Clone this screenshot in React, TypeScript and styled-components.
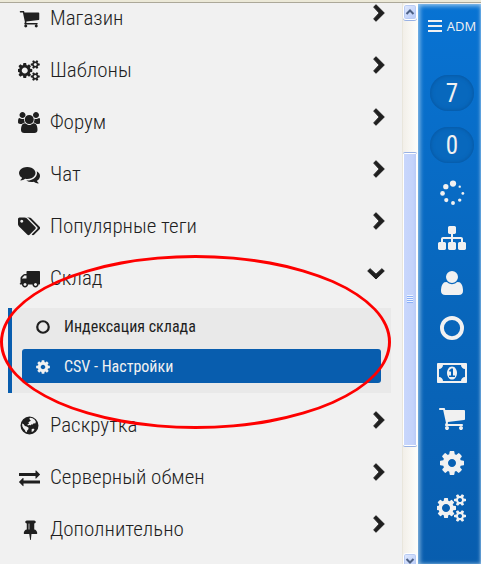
import React from "react";
import styled, { createGlobalStyle } from "styled-components";

const GlobalStyle = createGlobalStyle`
  *, *::before, *::after { box-sizing: border-box; }
  body { margin: 0; background: #f1f1f1; }
  button { font: inherit; color: inherit; border: 0; padding: 0; background: none; cursor: pointer; }
  ul { list-style: none; margin: 0; padding: 0; }
`;

const ink = "#1f1f1f";
const blue = "#085dae";

/* ---------- icons ---------- */

type IconName =
  | "cart" | "cog" | "cogs" | "users" | "comments" | "tags" | "truck" | "globe"
  | "exchange" | "pin" | "ring" | "sitemap" | "user" | "money" | "spinner";

const paths: Partial<Record<IconName, string>> = {
  cart: "M704 1536q0 52-38 90t-90 38-90-38-38-90 38-90 90-38 90 38 38 90zm896 0q0 52-38 90t-90 38-90-38-38-90 38-90 90-38 90 38 38 90zm128-1088v512q0 24-16.5 42.5t-40.5 21.5l-1044 122q13 60 13 70 0 16-24 64h920q26 0 45 19t19 45-19 45-45 19h-1024q-26 0-45-19t-19-45q0-11 8-31.5t16-36 21.5-40 15.5-29.5l-177-823h-204q-26 0-45-19t-19-45 19-45 45-19h256q16 0 28.5 6.5t19.5 15.5 13 24.5 8 26 5.5 29.5 4.5 26h1201q26 0 45 19t19 45z",
  cog: "M1152 896q0-106-75-181t-181-75-181 75-75 181 75 181 181 75 181-75 75-181zm512-109v222q0 12-8 23t-20 13l-185 28q-19 54-39 91 35 50 107 138 10 12 10 25t-9 23q-27 37-99 108t-94 71q-12 0-26-9l-138-108q-44 23-91 38-16 136-29 186-7 28-36 28h-222q-14 0-24.5-8.5t-11.5-21.5l-28-184q-49-16-90-37l-141 107q-10 9-25 9-14 0-25-11-126-114-165-168-7-10-7-23 0-12 8-23 15-21 51-66.5t54-70.5q-27-50-41-99l-183-27q-13-2-21-12.5t-8-23.5v-222q0-12 8-23t19-13l186-28q14-46 39-92-40-57-107-138-10-12-10-24 0-10 9-23 26-36 98.5-107.5t94.5-71.5q13 0 26 10l138 107q44-23 91-38 16-136 29-186 7-28 36-28h222q14 0 24.5 8.5t11.5 21.5l28 184q49 16 90 37l142-107q9-9 24-9 13 0 25 10 129 119 165 170 7 8 7 22 0 12-8 23-15 21-51 66.5t-54 70.5q26 50 41 98l183 28q13 2 21 12.5t8 23.5z",
  cogs: "M832 896q0-106-75-181t-181-75-181 75-75 181 75 181 181 75 181-75 75-181zm768 512q0-52-38-90t-90-38-90 38-38 90q0 53 37.5 90.5t90.5 37.5 90.5-37.5 37.5-90.5zm0-1024q0-52-38-90t-90-38-90 38-38 90q0 53 37.5 90.5t90.5 37.5 90.5-37.5 37.5-90.5zm-384 421v185q0 10-7 19.5t-16 10.5l-155 24q-11 35-32 76 34 48 90 115 7 11 7 20 0 12-7 19-23 30-82.5 89.5t-78.5 59.5q-11 0-21-7l-115-90q-37 19-77 31-11 108-23 155-7 24-30 24h-186q-11 0-20-7.5t-10-17.5l-23-153q-34-10-75-31l-118 89q-7 7-20 7-11 0-21-8-144-133-144-160 0-9 7-19 10-14 41-53t47-61q-23-44-35-82l-152-24q-10-1-17-9.5t-7-19.5v-185q0-10 7-19.5t16-10.5l155-24q11-35 32-76-34-48-90-115-7-11-7-20 0-12 7-20 22-30 82-89t79-59q11 0 21 7l115 90q34-18 77-32 11-108 23-154 7-24 30-24h186q11 0 20 7.5t10 17.5l23 153q34 10 75 31l118-89q8-7 20-7 11 0 21 8 144 133 144 160 0 8-7 19-12 16-42 54t-45 60q23 48 34 82l152 23q10 2 17 10.5t7 19.5zm640 533v140q0 16-149 31-12 27-30 52 51 113 51 138 0 4-4 7-122 71-124 71-8 0-46-47t-52-68q-20 2-30 2t-30-2q-14 21-52 68t-46 47q-2 0-124-71-4-3-4-7 0-25 51-138-18-25-30-52-149-15-149-31v-140q0-16 149-31 13-29 30-52-51-113-51-138 0-4 4-7 4-2 35-20t59-34 30-16q8 0 46 46.5t52 67.5q20-2 30-2t30 2q51-71 92-112l6-2q4 0 124 70 4 3 4 7 0 25-51 138 17 23 30 52 149 15 149 31zm0-1024v140q0 16-149 31-12 27-30 52 51 113 51 138 0 4-4 7-122 71-124 71-8 0-46-47t-52-68q-20 2-30 2t-30-2q-14 21-52 68t-46 47q-2 0-124-71-4-3-4-7 0-25 51-138-18-25-30-52-149-15-149-31v-140q0-16 149-31 13-29 30-52-51-113-51-138 0-4 4-7 4-2 35-20t59-34 30-16q8 0 46 46.5t52 67.5q20-2 30-2t30 2q51-71 92-112l6-2q4 0 124 70 4 3 4 7 0 25-51 138 17 23 30 52 149 15 149 31z",
  users: "M593 896q-162 5-265 128h-134q-82 0-138-40.5t-56-118.5q0-353 124-353 6 0 43.5 21t97.5 42.5 119 21.5q67 0 133-23-5 37-5 66 0 139 81 256zm1071 637q0 120-73 189.5t-194 69.5h-874q-121 0-194-69.5t-73-189.5q0-53 3.5-103.5t14-109 26.5-108.5 43-97.5 62-81 85.5-53.5 111.5-20q10 0 43 21.5t73 48 107 48 135 21.5 135-21.5 107-48 73-48 43-21.5q61 0 111.5 20t85.5 53.5 62 81 43 97.5 26.5 108.5 14 109 3.5 103.5zm-1024-1277q0 106-75 181t-181 75-181-75-75-181 75-181 181-75 181 75 75 181zm704 384q0 159-112.5 271.5t-271.5 112.5-271.5-112.5-112.5-271.5 112.5-271.5 271.5-112.5 271.5 112.5 112.5 271.5zm576 225q0 78-56 118.5t-138 40.5h-134q-103-123-265-128 81-117 81-256 0-29-5-66 66 23 133 23 59 0 119-21.5t97.5-42.5 43.5-21q124 0 124 353zm-128-609q0 106-75 181t-181 75-181-75-75-181 75-181 181-75 181 75 75 181z",
  comments: "M1408 768q0 139-94 257t-256.5 186.5-353.5 68.5q-86 0-176-16-124 88-278 128-36 9-86 16h-3q-11 0-20.5-8t-11.5-21q-1-3-1-6.5t.5-6.5 2-6l2.5-5 3.5-5.5 4-5 4.5-5 4-4.5q5-6 23-25t26-29.5 22.5-29 25-38.5 20.5-44q-124-72-195-177t-71-224q0-139 94-257t256.5-186.5 353.5-68.5 353.5 68.5 256.5 186.5 94 257zm384 256q0 120-71 224.5t-195 176.5q10 24 20.5 44t25 38.5 22.5 29 26 29.5 23 25q1 1 4 4.5t4.5 5 4 5 3.5 5.5l2.5 5 2 6 .5 6.5-1 6.5q-3 14-13 22t-22 7q-50-7-86-16-154-40-278-128-90 16-176 16-271 0-472-132 58 4 88 4 161 0 309-45t264-129q125-92 192-212t67-254q0-77-23-152 129 71 204 178t75 230z",
  tags: "M448 448q0-53-37.5-90.5t-90.5-37.5-90.5 37.5-37.5 90.5 37.5 90.5 90.5 37.5 90.5-37.5 37.5-90.5zm1067 576q0 53-37 90l-491 492q-39 37-91 37-53 0-90-37l-715-716q-38-37-64.5-101t-26.5-117v-416q0-52 38-90t90-38h416q53 0 117 26.5t102 64.5l715 714q37 39 37 91zm384 0q0 53-37 90l-491 492q-39 37-91 37-36 0-59-14t-53-45l470-470q37-37 37-90 0-52-37-91l-715-714q-38-38-102-64.5t-117-26.5h224q53 0 117 26.5t102 64.5l715 714q37 39 37 91z",
  truck: "M640 1408q0-52-38-90t-90-38-90 38-38 90 38 90 90 38 90-38 38-90zm-384-512h384v-256h-158q-13 0-22 9l-195 195q-9 9-9 22v30zm1280 512q0-52-38-90t-90-38-90 38-38 90 38 90 90 38 90-38 38-90zm256-1088v1024q0 15-4 26.5t-13.5 18.5-16.5 11.5-23.5 6-22.5 2-25.5 0-22.5-.5q0 106-75 181t-181 75-181-75-75-181h-384q0 106-75 181t-181 75-181-75-75-181h-64q-3 0-22.5.5t-25.5 0-22.5-2-23.5-6-16.5-11.5-13.5-18.5-4-26.5q0-26 19-45t45-19v-320q0-8-.5-35t0-38 2.5-34.5 6.5-37 14-30.5 22.5-30l198-198q19-19 50.5-32t58.5-13h160v-192q0-26 19-45t45-19h1024q26 0 45 19t19 45z",
  exchange: "M1792 1184v192q0 13-9.5 22.5t-22.5 9.5h-1376v192q0 13-9.5 22.5t-22.5 9.5q-12 0-24-10l-319-320q-9-9-9-22 0-14 9-23l320-320q9-9 23-9 13 0 22.5 9.5t9.5 22.5v192h1376q13 0 22.5 9.5t9.5 22.5zm0-544q0 14-9 23l-320 320q-9 9-23 9-13 0-22.5-9.5t-9.5-22.5v-192h-1376q-13 0-22.5-9.5t-9.5-22.5v-192q0-13 9.5-22.5t22.5-9.5h1376v-192q0-14 9-23t23-9q12 0 24 10l319 319q9 9 9 23z",
  pin: "M800 864v-448q0-14-9-23t-23-9-23 9-9 23v448q0 14 9 23t23 9 23-9 9-23zm672 352q0 26-19 45t-45 19h-429l-51 483q-2 12-10.5 20.5t-20.5 8.5h-1q-27 0-32-27l-76-485h-404q-26 0-45-19t-19-45q0-123 78.5-221.5t177.5-98.5v-512q-52 0-90-38t-38-90 38-90 90-38h640q52 0 90 38t38 90-38 90-90 38v512q99 0 177.5 98.5t78.5 221.5z",
  sitemap: "M1792 1248v320q0 40-28 68t-68 28h-320q-40 0-68-28t-28-68v-320q0-40 28-68t68-28h96v-192h-512v192h96q40 0 68 28t28 68v320q0 40-28 68t-68 28h-320q-40 0-68-28t-28-68v-320q0-40 28-68t68-28h96v-192h-512v192h96q40 0 68 28t28 68v320q0 40-28 68t-68 28h-320q-40 0-68-28t-28-68v-320q0-40 28-68t68-28h96v-192q0-52 38-90t90-38h512v-192h-96q-40 0-68-28t-28-68v-320q0-40 28-68t68-28h320q40 0 68 28t28 68v320q0 40-28 68t-68 28h-96v192h512q52 0 90 38t38 90v192h96q40 0 68 28t28 68z",
  user: "M1600 1405q0 120-73 189.5t-194 69.5h-874q-121 0-194-69.5t-73-189.5q0-53 3.5-103.5t14-109 26.5-108.5 43-97.5 62-81 85.5-53.5 111.5-20q9 0 42 21.5t74.5 48 108 48 133.5 21.5 133.5-21.5 108-48 74.5-48 42-21.5q61 0 111.5 20t85.5 53.5 62 81 43 97.5 26.5 108.5 14 109 3.5 103.5zm-320-893q0 159-112.5 271.5t-271.5 112.5-271.5-112.5-112.5-271.5 112.5-271.5 271.5-112.5 271.5 112.5 112.5 271.5z",
  money: "M768 1152h384v-96h-128v-448h-114l-148 137 77 80q42-37 55-57h2v288h-128v96zm512-256q0 70-21 142t-59.5 134-101.5 101-138 39-138-39-101.5-101-59.5-134-21-142 21-142 59.5-134 101.5-101 138-39 138 39 101.5 101 59.5 134 21 142zm512 256v-512q-106 0-181-75t-75-181h-1152q0 106-75 181t-181 75v512q106 0 181 75t75 181h1152q0-106 75-181t181-75zm128-832v1152q0 26-19 45t-45 19h-1792q-26 0-45-19t-19-45v-1152q0-26 19-45t45-19h1792q26 0 45 19t19 45z",
  globe: "M896 128a768 768 0 1 1 0 1536a768 768 0 1 1 0-1536zM960 230L1160 270L1340 400L1440 580L1390 720L1250 700L1180 800L1070 790L1010 880L880 860L760 900L720 800L860 720L800 620L900 560L1010 500L930 400L880 300zM260 720L400 790L500 930L660 990L820 1080L800 1220L700 1330L660 1470L560 1420L500 1270L380 1150L290 980zM1080 1220L1210 1150L1320 1230L1220 1380L1080 1440z",
};

const widths: Partial<Record<IconName, number>> = { cogs: 1920, users: 1920, tags: 1920, money: 1920, pin: 1536 };

const spinnerDots: [number, number, number][] = [
  [960, 290, 200], [500, 490, 170], [290, 920, 150], [530, 1350, 135],
  [960, 1540, 125], [1390, 1350, 110], [1590, 920, 90], [1390, 490, 75],
];

const Svg = styled.svg`
  display: block;
  flex: none;
  fill: currentColor;
`;

function Icon({ name, size }: { name: IconName; size: number }) {
  const w = widths[name] ?? 1792;
  return (
    <Svg viewBox={`0 0 ${w} 1792`} width={(w / 1792) * size} height={size} aria-hidden="true">
      {name === "ring" && <circle cx="896" cy="896" r="644" fill="none" stroke="currentColor" strokeWidth="248" />}
      {name === "spinner" && spinnerDots.map(([x, y, r]) => <circle key={`${x}-${y}`} cx={x} cy={y} r={r} />)}
      {paths[name] && <path d={paths[name]} fillRule={name === "globe" ? "evenodd" : "nonzero"} />}
    </Svg>
  );
}

const ChevronSvg = styled.svg`
  display: block;
  flex: none;
  align-self: flex-start;
  margin-top: 12px;
  fill: currentColor;
  stroke: currentColor;
  stroke-width: 1;
  stroke-linejoin: round;
`;

function Chevron({ open }: { open?: boolean }) {
  return open ? (
    <ChevronSvg width="18" height="18" viewBox="0 0 18 18" aria-hidden="true">
      <path d="M.7 7L3.1 4.7L9 10.2L14.9 4.7L17.3 7L9 15z" />
    </ChevronSvg>
  ) : (
    <ChevronSvg width="12" height="18" viewBox="0 0 12 18" aria-hidden="true">
      <path d="M3 .7L11.3 9L3 17.3L.7 14.9L6.2 9L.7 3.1z" />
    </ChevronSvg>
  );
}

/* ---------- page ---------- */

const Page = styled.div`
  height: 100vh;
  display: flex;
  flex-direction: column;
  overflow: hidden;
  font-family: "Roboto Condensed", Roboto, sans-serif;
  color: ${ink};
`;

const TopEdge = styled.div`
  flex: none;
  height: 3px;
  background: #ece9d8;
  border-bottom: 1px solid #aca899;
`;

const Body = styled.div`
  flex: 1;
  min-height: 0;
  display: grid;
  grid-template-columns: minmax(0, 1fr) 16px 63px;
  grid-template-rows: minmax(0, 1fr);
`;

const Menu = styled.nav`
  overflow: hidden;
  background: #f1f1f1;
`;

const MenuList = styled.ul`
  margin-top: -11px;
`;

const MenuButton = styled.button`
  width: 100%;
  height: 52px;
  padding: 0 17px 0 18px;
  display: flex;
  align-items: center;
  gap: 10px;
  text-align: left;
  font-size: 21px;
  font-weight: 300;
  line-height: 24px;
`;

const IconSlot = styled.span<{ $width: number }>`
  flex: none;
  width: ${(p) => p.$width}px;
  display: flex;
  justify-content: center;
`;

const Label = styled.span`
  flex: 1;
  min-width: 0;
  white-space: nowrap;
`;

const SubMenu = styled.div`
  position: relative;
  margin: 4px 11px 6px 8px;
  padding: 1px 10px 10px;
  border-left: 4px solid ${blue};
  background: #e9e9e9;
`;

const SubList = styled.ul`
  display: flex;
  flex-direction: column;
  gap: 6px;
`;

const SubButton = styled.button<{ $active?: boolean }>`
  width: 100%;
  height: 34px;
  padding: 1px 13px 0;
  display: flex;
  align-items: center;
  gap: 13px;
  border-radius: 3px;
  text-align: left;
  font-size: 16px;
  font-weight: 400;
  line-height: 20px;
  color: ${(p) => (p.$active ? "#f1f1f1" : ink)};
  background: ${(p) => (p.$active ? blue : "transparent")};
`;

const Highlight = styled.div`
  position: absolute;
  z-index: 1;
  top: -53px;
  bottom: -36px;
  left: -12px;
  right: 0;
  border: 3px solid #fe0000;
  border-radius: 50%;
  pointer-events: none;
`;

/* ---------- scrollbar ---------- */

const ScrollBar = styled.div`
  display: flex;
  flex-direction: column;
  align-items: stretch;
  margin-bottom: -5px;
  padding: 1px 1px 0 0;
  border-left: 1px solid #e9e6dc;
  background: linear-gradient(90deg, #f2efe9, #fefefb);
`;

const ScrollButton = styled.button`
  flex: none;
  height: 16px;
  display: flex;
  align-items: center;
  justify-content: center;
  border: 1px solid #fff;
  border-radius: 3px;
  box-shadow: inset 0 0 0 1px #b9cbf3, 0 1px 0 #98b1e4;
  background: linear-gradient(135deg, #e1eafe, #b4c8f8);
  color: #4d6185;

  svg {
    fill: none;
    stroke: currentColor;
    stroke-width: 2;
  }
`;

const Gap = styled.div<{ $grow: number }>`
  flex: ${(p) => p.$grow} 1 0;
`;

const Thumb = styled.div`
  flex: 294 1 0;
  display: flex;
  flex-direction: column;
  align-items: center;
  justify-content: center;
  gap: 1px;
  border: 1px solid #98b1e4;
  border-width: 1px 0;
  border-radius: 2px;
  box-shadow: inset 0 0 0 1px #fff;
  background: linear-gradient(90deg, #c9d7fc, #c4d3fb 70%, #b7c9f5);
`;

const Grip = styled.span`
  width: 6px;
  height: 1px;
  background: #8cb0f8;
  box-shadow: 0 -1px 0 #eef4fe;
`;

/* ---------- admin rail ---------- */

const Rail = styled.aside`
  display: flex;
  flex-direction: column;
  align-items: center;
  padding: 12px 0 0 5px;
  margin-top: 1px;
  overflow: hidden;
  color: #f1f1f1;
  background: linear-gradient(180deg, #0873d3, #0867bd 50%, #085dae);
  box-shadow: inset 1px 1px 4px 1px rgba(200, 225, 245, 0.7), inset -1px 0 2px rgba(150, 195, 235, 0.4);
`;

const RailHeader = styled.button`
  height: 20px;
  display: flex;
  align-items: center;
  gap: 5px;
  margin-bottom: 39px;
  font-family: "Open Sans", sans-serif;
  font-size: 13px;
  font-weight: 400;
  line-height: 18px;
`;

const Badge = styled.button`
  flex: none;
  width: 44px;
  height: 36px;
  margin-bottom: 16px;
  border-radius: 18px;
  background: #0868bd;
  box-shadow: inset 0 0 4px #07529a;
  font-size: 25px;
  line-height: 38px;
  text-align: center;
`;

const RailIcons = styled.div`
  display: flex;
  flex-direction: column;
  align-items: center;
  margin-top: -9px;
`;

const RailButton = styled.button`
  height: 45px;
  display: flex;
  align-items: center;
`;

const before: [IconName, string][] = [
  ["cart", "Магазин"],
  ["cogs", "Шаблоны"],
  ["users", "Форум"],
  ["comments", "Чат"],
  ["tags", "Популярные теги"],
];

const after: [IconName, string][] = [
  ["globe", "Раскрутка"],
  ["exchange", "Серверный обмен"],
  ["pin", "Дополнительно"],
];

const railIcons: IconName[] = ["spinner", "sitemap", "user", "ring", "money", "cart", "cog", "cogs"];

function MenuItem({ icon, label, open, children }: { icon: IconName; label: string; open?: boolean; children?: React.ReactNode }) {
  return (
    <li>
      <MenuButton type="button" aria-expanded={!!open}>
        <IconSlot $width={22}><Icon name={icon} size={21} /></IconSlot>
        <Label>{label}</Label>
        <Chevron open={open} />
      </MenuButton>
      {children}
    </li>
  );
}

export default function App() {
  return (
    <Page>
      <GlobalStyle />
      <TopEdge />
      <Body>
        <Menu>
          <MenuList>
            {before.map(([icon, label]) => <MenuItem key={label} icon={icon} label={label} />)}
            <MenuItem icon="truck" label="Склад" open>
              <SubMenu>
                <SubList>
                  <li>
                    <SubButton type="button">
                      <IconSlot $width={16}><Icon name="ring" size={16} /></IconSlot>
                      <Label>Индексация склада</Label>
                    </SubButton>
                  </li>
                  <li>
                    <SubButton type="button" $active>
                      <IconSlot $width={16}><Icon name="cog" size={16} /></IconSlot>
                      <Label>CSV - Настройки</Label>
                    </SubButton>
                  </li>
                </SubList>
                <Highlight />
              </SubMenu>
            </MenuItem>
            {after.map(([icon, label]) => <MenuItem key={label} icon={icon} label={label} />)}
          </MenuList>
        </Menu>
        <ScrollBar>
          <ScrollButton type="button" aria-label="Scroll up">
            <svg width="10" height="8" viewBox="0 0 10 8"><path d="M1.5 6L5 2.5L8.5 6" /></svg>
          </ScrollButton>
          <Gap $grow={133} />
          <Thumb><Grip /><Grip /><Grip /><Grip /></Thumb>
          <Gap $grow={107} />
          <ScrollButton type="button" aria-label="Scroll down">
            <svg width="10" height="8" viewBox="0 0 10 8"><path d="M1.5 2L5 5.5L8.5 2" /></svg>
          </ScrollButton>
        </ScrollBar>
        <Rail>
          <RailHeader type="button">
            <Svg width="14" height="12" viewBox="0 0 14 12" aria-hidden="true">
              <path d="M0 0h14v2H0zM0 5h14v2H0zM0 10h14v2H0z" />
            </Svg>
            ADM
          </RailHeader>
          <Badge type="button">7</Badge>
          <Badge type="button">0</Badge>
          <RailIcons>
            {railIcons.map((name) => (
              <RailButton key={name} type="button" aria-label={name}><Icon name={name} size={28} /></RailButton>
            ))}
          </RailIcons>
        </Rail>
      </Body>
    </Page>
  );
}
